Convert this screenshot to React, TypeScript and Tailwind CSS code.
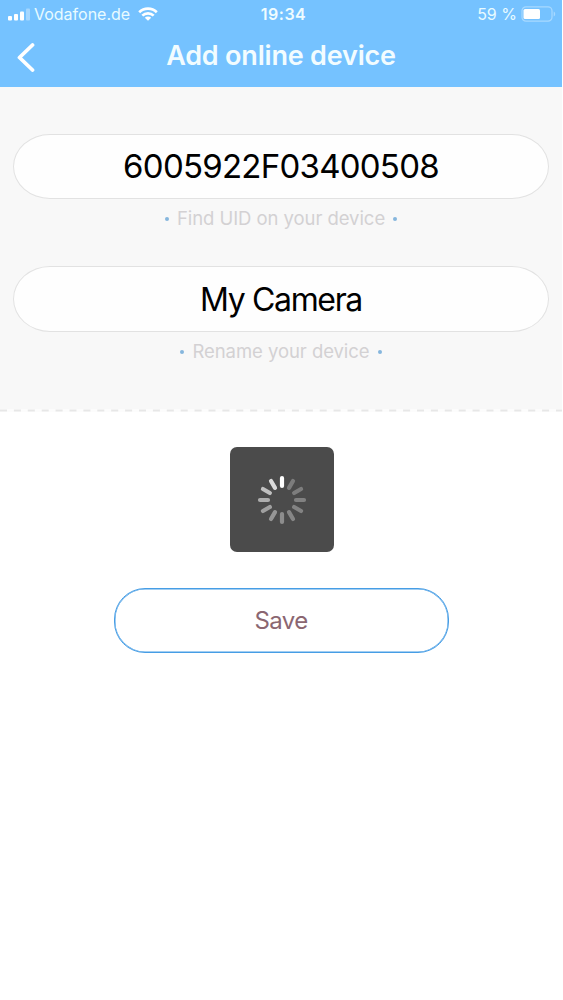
import type { ReactNode } from 'react';

const SPINNER_OPACITIES = [
  1, 0.27, 0.28, 0.3, 0.31, 0.33, 0.37, 0.41, 0.47, 0.55, 0.65, 0.8,
];

const StatusBar = () => {
  return (
    <div className="flex h-7 items-center pr-[6px] pl-2">
      <div className="flex flex-1 items-center">
        <svg width="22" height="13" viewBox="0 0 22 13" fill="#fff">
          <rect x="0" y="8" width="4" height="4.5" rx="1" />
          <rect x="6" y="6" width="4" height="6.5" rx="1" />
          <rect x="12" y="3.5" width="4" height="9" rx="1" />
          <rect x="18" y="0.5" width="4" height="12" rx="1" opacity="0.35" />
        </svg>
        <span className="ml-[4px] text-[16px] text-[#e8fbff]">
          Vodafone.de
        </span>
        <svg
          className="ml-[8px]"
          width="20"
          height="14"
          viewBox="0 0 20 14"
          fill="none"
          stroke="#fff"
          strokeWidth="2.7"
        >
          <path d="M1.2 5.2a12.6 12.6 0 0 1 17.6 0" />
          <path d="M4.3 8.6a8.2 8.2 0 0 1 11.4 0" />
          <path d="M10 13.8 6.8 10.8a4.6 4.6 0 0 1 6.4 0Z" fill="#fff" stroke="none" />
        </svg>
      </div>
      <span className="pl-[3px] text-[16px] font-semibold tracking-[0.5px] text-[#effcff]">
        19:34
      </span>
      <div className="flex flex-1 items-center justify-end">
        <span className="text-[16px] text-[#e8fbff]">59 %</span>
        <svg className="ml-1" width="35" height="16" viewBox="0 0 35 16">
          <rect
            x="1"
            y="0.8"
            width="30"
            height="14.4"
            rx="4"
            fill="none"
            stroke="#a8d9ff"
            strokeWidth="1.2"
          />
          <rect x="2.5" y="3" width="16.5" height="10" rx="1.5" fill="#fff" />
          <path d="M32.7 5.5c2 .8 2 4.2 0 5Z" fill="#a8d9ff" />
        </svg>
      </div>
    </div>
  );
};

const Hint = ({ children }: { children: ReactNode }) => {
  return (
    <div className="mt-2 flex h-6 items-center justify-center gap-[8px] text-[18.5px] tracking-[-0.06px] text-[#d3d1d3]">
      <span className="size-1 rounded-full bg-[#86b6dd]" />
      <span>{children}</span>
      <span className="size-1 rounded-full bg-[#86b6dd]" />
    </div>
  );
};

const Spinner = () => {
  return (
    <div className="ml-[2px] flex h-[105px] w-[104px] items-center justify-center rounded-[7px] bg-[#4b4b4b]">
      <svg width="50" height="50" viewBox="-25 -25 50 50">
        {SPINNER_OPACITIES.map((opacity, i) => (
          <line
            key={i}
            y1="-14"
            y2="-22"
            stroke="#fff"
            strokeWidth="4.2"
            strokeLinecap="round"
            opacity={opacity}
            transform={`rotate(${i * 30})`}
          />
        ))}
      </svg>
    </div>
  );
};

export default function App() {
  return (
    <div className="h-[1000px] w-[563px] overflow-hidden bg-white pr-px font-[Inter,sans-serif]">
      <header className="h-[87px] bg-[#75c2ff]">
        <StatusBar />
        <div className="grid h-[56px] grid-cols-[60px_1fr_60px] items-center">
          <svg
            className="ml-[15px]"
            width="22"
            height="32"
            viewBox="0 0 22 32"
            fill="none"
            stroke="#fff"
            strokeWidth="3.8"
            strokeLinecap="round"
            strokeLinejoin="round"
          >
            <path d="M17.5 5 4.5 17.5 17.5 30" />
          </svg>
          <h1 className="text-center text-[27px] font-semibold tracking-[-0.2px] text-[#f2fcff]">
            Add online device
          </h1>
        </div>
      </header>

      <main>
        <section className="h-[322px] bg-[#f8f8f8] px-[13px] pt-[47px]">
          <div className="flex h-[65px] items-center justify-center rounded-[37px/32.5px] border border-[#e2e2e2] bg-[#fefefe] pt-px text-[33px] tracking-[-0.75px] text-black">
            6005922F03400508
          </div>
          <Hint>Find UID on your device</Hint>
          <div className="mt-[35px] flex h-[66px] items-center justify-center rounded-[37px/33px] border border-[#e2e2e2] bg-[#fefefe] pt-px text-[32px] tracking-[-1.35px] text-black">
            My Camera
          </div>
          <Hint>Rename your device</Hint>
        </section>
        <svg className="block bg-[#fcfcfc]" width="562" height="3">
          <line
            x2="562"
            y1="1.5"
            y2="1.5"
            stroke="#e7e7e7"
            strokeWidth="2"
            strokeDasharray="7 6.9"
          />
        </svg>

        <div className="flex flex-col items-center pt-[35px]">
          <Spinner />
          <button className="mt-9 h-[65px] w-[335px] rounded-[31px] border-[1.5px] border-[#469de5] text-[24px] tracking-[-0.6px] text-[#8b6671] shadow-[inset_0_0_0_0.5px_#469de5]">
            Save
          </button>
        </div>
      </main>
    </div>
  );
}
